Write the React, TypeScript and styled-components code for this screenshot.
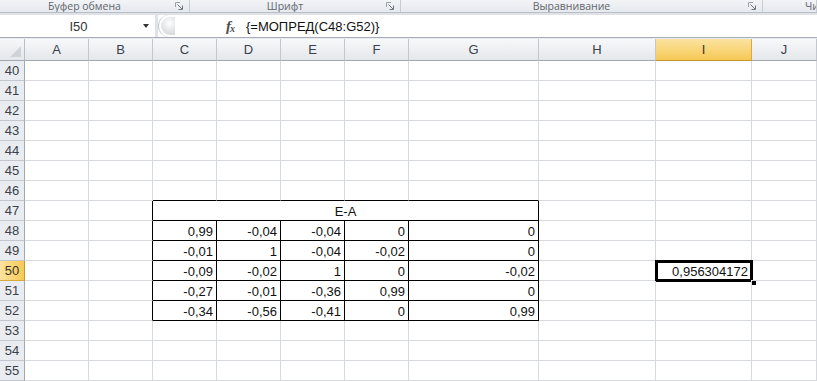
import React from "react";
import styled, { createGlobalStyle } from "styled-components";

const GlobalStyle = createGlobalStyle`
  html, body {
    margin: 0;
    padding: 0;
    background: #e9ecf0;
    overflow: hidden;
  }
  body {
    width: 817px;
    height: 381px;
    font-family: "Liberation Sans", Arial, sans-serif;
  }
`;

const GRID = "#d6d9dd";
const INK = "#000";

type Column = { id: string; width: number };

const columns: Column[] = [
  { id: "A", width: 64 },
  { id: "B", width: 64 },
  { id: "C", width: 64 },
  { id: "D", width: 64 },
  { id: "E", width: 64 },
  { id: "F", width: 64 },
  { id: "G", width: 130 },
  { id: "H", width: 117 },
  { id: "I", width: 96 },
  { id: "J", width: 0 },
];

const rows = Array.from({ length: 16 }, (_, i) => 40 + i);

// E-A block lives in C47:G52, header merged across row 47
const TABLE = { top: 47, bottom: 52, left: 2, right: 6 };
const values: Record<number, string[]> = {
  48: ["0,99", "-0,04", "-0,04", "0", "0"],
  49: ["-0,01", "1", "-0,04", "-0,02", "0"],
  50: ["-0,09", "-0,02", "1", "0", "-0,02"],
  51: ["-0,27", "-0,01", "-0,36", "0,99", "0"],
  52: ["-0,34", "-0,56", "-0,41", "0", "0,99"],
};
const active = { row: 50, col: 8, value: "0,956304172" };

const inTable = (r: number, c: number) =>
  r >= TABLE.top && r <= TABLE.bottom && c >= TABLE.left && c <= TABLE.right;

const Page = styled.div`
  display: flex;
  flex-direction: column;
  width: 817px;
  height: 381px;
  overflow: hidden;
`;

/* ---------- ribbon group captions ---------- */

const Ribbon = styled.div`
  display: flex;
  height: 13px;
  box-sizing: border-box;
  border-bottom: 1px solid #b7bec8;
  background: linear-gradient(#f2f4f7, #e6e9ee);
  overflow: hidden;
`;

const RibbonGroup = styled.div<{ $width?: number; $pad?: number }>`
  display: flex;
  flex: ${(p) => (p.$width ? `0 0 ${p.$width}px` : "1")};
  box-sizing: border-box;
  padding-left: ${(p) => p.$pad ?? 0}px;
  border-right: 1px solid #c8cdd4;
  overflow: hidden;
`;

const GroupLabel = styled.div<{ $left?: boolean }>`
  flex: 1;
  text-align: ${(p) => (p.$left ? "left" : "center")};
  font-family: "Open Sans", "Noto Sans", sans-serif;
  font-size: 10.5px;
  line-height: 12px;
  color: #62676e;
  white-space: nowrap;
`;

const Launcher = styled.div`
  flex: 0 0 20px;
  display: flex;
  align-items: center;
  justify-content: center;
`;

const LauncherIcon = () => (
  <svg width="8" height="8" viewBox="0 0 8 8">
    <path d="M0.5 5V0.5H5" stroke="#9aa1aa" fill="none" />
    <path d="M2.5 2.5L7 7M7.5 3.5V7.5H3.5" stroke="#6d7682" fill="none" />
  </svg>
);

/* ---------- formula bar ---------- */

const FormulaRow = styled.div`
  display: flex;
  height: 25px;
  box-sizing: border-box;
  padding-top: 2px;
  gap: 3px;
  background: #dfe3e8;
  border-bottom: 1px solid #a6adb7;
`;

const NameBox = styled.div`
  flex: 0 0 155px;
  display: flex;
  align-items: center;
  background: #fff;
`;

const NameText = styled.span`
  flex: 1;
  text-align: center;
  padding-left: 14px;
  font-size: 13px;
  color: #333;
`;

const DropArrow = styled.span`
  width: 0;
  height: 0;
  margin-right: 6px;
  border-left: 3.5px solid transparent;
  border-right: 3.5px solid transparent;
  border-top: 4px solid #333;
`;

const FormulaBox = styled.div`
  flex: 1;
  display: flex;
  align-items: center;
  background: #fff;
`;

const FxArea = styled.div`
  flex: 0 0 80px;
  align-self: stretch;
  display: flex;
  align-items: center;
  justify-content: space-between;
  box-sizing: border-box;
  padding: 0 4px 0 2px;
  border-radius: 11px 0 0 11px;
  border-left: 1px solid #c4c9cf;
`;

const Knob = styled.span`
  width: 14px;
  height: 18px;
  border-radius: 9px 0 0 9px;
  background: radial-gradient(circle at 60% 35%, #ffffff 0, #e6e8eb 45%, #cfd3d8 100%);
`;

const Fx = styled.span`
  font-family: "Liberation Serif", "Times New Roman", serif;
  font-style: italic;
  font-weight: bold;
  font-size: 15px;
  color: #4d4d4d;
  letter-spacing: -1px;
`;

const FxSub = styled.span`
  font-size: 10px;
  vertical-align: -1px;
`;

const FormulaText = styled.span`
  padding-left: 8px;
  font-size: 13px;
  color: #111;
`;

/* ---------- sheet grid ---------- */

const Sheet = styled.div`
  margin-top: 1px;
  display: grid;
  grid-template-columns: 25px ${columns
      .filter((c) => c.width)
      .map((c) => `${c.width}px`)
      .join(" ")} 1fr;
  grid-auto-rows: 20px;
  grid-template-rows: 22px;
  background: #fff;
`;

const Corner = styled.div`
  box-sizing: border-box;
  background: linear-gradient(#f6f7f9, #e4e7eb);
  border-right: 1px solid #b9bec5;
  border-bottom: 1px solid #a2a8b0;
  display: flex;
  align-items: flex-end;
  justify-content: flex-end;
  padding: 0 3px 3px 0;
`;

const ColHeader = styled.div<{ $active?: boolean }>`
  box-sizing: border-box;
  display: flex;
  align-items: center;
  justify-content: center;
  font-size: 13px;
  color: ${(p) => (p.$active ? "#3b3522" : "#3c4148")};
  background: ${(p) =>
    p.$active
      ? "linear-gradient(#fbe3a0, #f6c955)"
      : "linear-gradient(#f7f8fa, #e4e7eb)"};
  border-right: 1px solid ${(p) => (p.$active ? "#d9a93f" : "#c3c7cd")};
  border-bottom: 1px solid ${(p) => (p.$active ? "#c9942c" : "#a2a8b0")};
`;

const RowHeader = styled.div<{ $active?: boolean }>`
  box-sizing: border-box;
  display: flex;
  align-items: center;
  justify-content: center;
  font-size: 13px;
  color: ${(p) => (p.$active ? "#3b3522" : "#3c4148")};
  background: ${(p) =>
    p.$active ? "linear-gradient(90deg, #fbe3a0, #f6c955)" : "#e9ecf0"};
  border-right: 1px solid ${(p) => (p.$active ? "#c9942c" : "#a2a8b0")};
  border-bottom: 1px solid ${(p) => (p.$active ? "#d9a93f" : "#c3c7cd")};
`;

const Cell = styled.div<{
  $right?: boolean;
  $bottom?: boolean;
  $span?: number;
  $center?: boolean;
}>`
  position: relative;
  box-sizing: border-box;
  grid-column: span ${(p) => p.$span ?? 1};
  display: flex;
  align-items: center;
  justify-content: ${(p) => (p.$center ? "center" : "flex-end")};
  padding: 1px 3px 0;
  font-size: 13px;
  color: #111;
  white-space: nowrap;
  border-right: 1px solid ${(p) => (p.$right ? INK : GRID)};
  border-bottom: 1px solid ${(p) => (p.$bottom ? INK : GRID)};
`;

const Selection = styled.div`
  position: absolute;
  top: -1px;
  left: -1px;
  right: -2px;
  bottom: -2px;
  border: 3px solid #000;
  pointer-events: none;
`;

const FillHandle = styled.span`
  position: absolute;
  right: -7px;
  bottom: -7px;
  width: 4px;
  height: 4px;
  background: #000;
  border: 1px solid #fff;
`;

const CornerMark = () => (
  <svg width="11" height="11" viewBox="0 0 11 11">
    <polygon points="11,0 11,11 0,11" fill="#cfd3d8" />
  </svg>
);

function renderRow(r: number) {
  const cells: React.ReactNode[] = [
    <RowHeader key="h" $active={r === active.row}>
      {r}
    </RowHeader>,
  ];
  let c = 0;
  while (c < columns.length) {
    if (r === TABLE.top && c === TABLE.left) {
      cells.push(
        <Cell key={c} $span={5} $center $right $bottom>
          E-A
        </Cell>
      );
      c = TABLE.right + 1;
      continue;
    }
    const right = inTable(r, c) || inTable(r, c + 1);
    const bottom = inTable(r, c) || inTable(r + 1, c);
    const data = values[r];
    const text =
      data && c >= TABLE.left && c <= TABLE.right ? data[c - TABLE.left] : "";
    const isActive = r === active.row && c === active.col;
    cells.push(
      <Cell key={c} $right={right} $bottom={bottom}>
        {isActive ? active.value : text}
        {isActive && (
          <Selection>
            <FillHandle />
          </Selection>
        )}
      </Cell>
    );
    c++;
  }
  return cells;
}

export default function App() {
  return (
    <Page>
      <GlobalStyle />
      <Ribbon>
        <RibbonGroup $width={190}>
          <GroupLabel>Буфер обмена</GroupLabel>
          <Launcher>
            <LauncherIcon />
          </Launcher>
        </RibbonGroup>
        <RibbonGroup $width={211}>
          <GroupLabel>Шрифт</GroupLabel>
          <Launcher>
            <LauncherIcon />
          </Launcher>
        </RibbonGroup>
        <RibbonGroup $width={362}>
          <GroupLabel>Выравнивание</GroupLabel>
          <Launcher>
            <LauncherIcon />
          </Launcher>
        </RibbonGroup>
        <RibbonGroup $pad={42}>
          <GroupLabel $left>Число</GroupLabel>
        </RibbonGroup>
      </Ribbon>

      <FormulaRow>
        <NameBox>
          <NameText>I50</NameText>
          <DropArrow />
        </NameBox>
        <FormulaBox>
          <FxArea>
            <Knob />
            <Fx>
              f<FxSub>x</FxSub>
            </Fx>
          </FxArea>
          <FormulaText>{"{=МОПРЕД(C48:G52)}"}</FormulaText>
        </FormulaBox>
      </FormulaRow>

      <Sheet>
        <Corner>
          <CornerMark />
        </Corner>
        {columns.map((col, i) => (
          <ColHeader key={col.id} $active={i === active.col}>
            {col.id}
          </ColHeader>
        ))}
        {rows.map((r) => renderRow(r))}
      </Sheet>
    </Page>
  );
}
